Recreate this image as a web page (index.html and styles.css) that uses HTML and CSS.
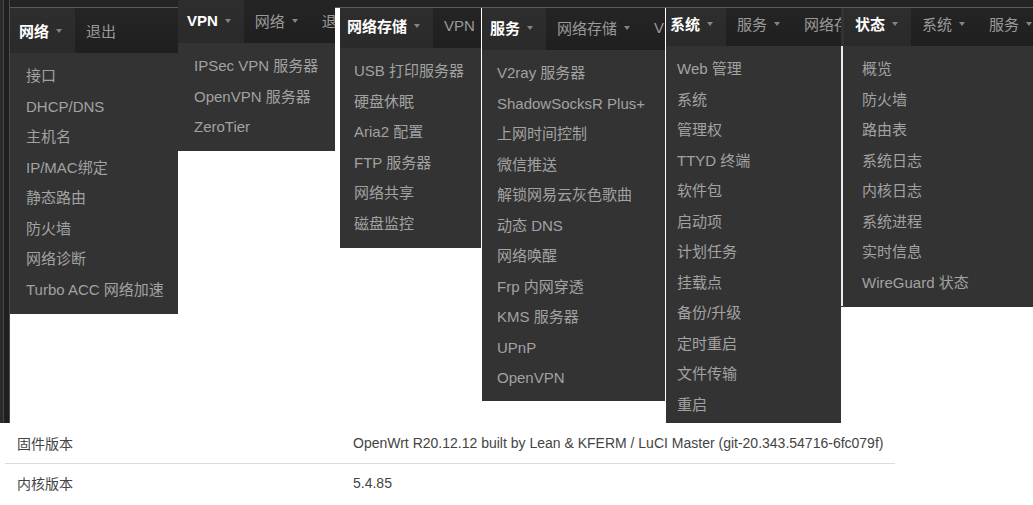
FILE: index.html
```html
<!DOCTYPE html>
<html lang="zh-CN">
<head>
<meta charset="utf-8">
<title>OpenWrt 菜单</title>
<link rel="stylesheet" href="styles.css">
</head>
<body>
<div class="collage">
  <div class="topband"></div>
  <div class="leftstrip"></div>

  <div class="panel p-net">
    <div class="inner">
      <nav class="bar">
        <span class="tab active">网络<i class="caret"></i></span>
        <span class="tab">退出</span>
      </nav>
      <ul class="drop">
        <li>接口</li>
        <li>DHCP/DNS</li>
        <li>主机名</li>
        <li>IP/MAC绑定</li>
        <li>静态路由</li>
        <li>防火墙</li>
        <li>网络诊断</li>
        <li>Turbo ACC 网络加速</li>
      </ul>
    </div>
  </div>

  <div class="panel p-vpn">
    <div class="inner">
      <nav class="bar">
        <span class="tab active">VPN<i class="caret"></i></span>
        <span class="tab">网络<i class="caret"></i></span>
        <span class="tab">退出</span>
      </nav>
      <ul class="drop">
        <li>IPSec VPN 服务器</li>
        <li>OpenVPN 服务器</li>
        <li>ZeroTier</li>
      </ul>
    </div>
  </div>

  <div class="panel p-nas">
    <div class="inner">
      <nav class="bar">
        <span class="tab active">网络存储<i class="caret"></i></span>
        <span class="tab">VPN<i class="caret"></i></span>
      </nav>
      <ul class="drop">
        <li>USB 打印服务器</li>
        <li>硬盘休眠</li>
        <li>Aria2 配置</li>
        <li>FTP 服务器</li>
        <li>网络共享</li>
        <li>磁盘监控</li>
      </ul>
    </div>
  </div>

  <div class="panel p-svc">
    <div class="inner">
      <nav class="bar">
        <span class="tab active">服务<i class="caret"></i></span>
        <span class="tab">网络存储<i class="caret"></i></span>
        <span class="tab">VPN<i class="caret"></i></span>
      </nav>
      <ul class="drop">
        <li>V2ray 服务器</li>
        <li>ShadowSocksR Plus+</li>
        <li>上网时间控制</li>
        <li>微信推送</li>
        <li>解锁网易云灰色歌曲</li>
        <li>动态 DNS</li>
        <li>网络唤醒</li>
        <li>Frp 内网穿透</li>
        <li>KMS 服务器</li>
        <li>UPnP</li>
        <li>OpenVPN</li>
      </ul>
    </div>
  </div>

  <div class="panel p-sys">
    <div class="inner">
      <nav class="bar">
        <span class="tab active">系统<i class="caret"></i></span>
        <span class="tab">服务<i class="caret"></i></span>
        <span class="tab">网络存储<i class="caret"></i></span>
      </nav>
      <ul class="drop">
        <li>Web 管理</li>
        <li>系统</li>
        <li>管理权</li>
        <li>TTYD 终端</li>
        <li>软件包</li>
        <li>启动项</li>
        <li>计划任务</li>
        <li>挂载点</li>
        <li>备份/升级</li>
        <li>定时重启</li>
        <li>文件传输</li>
        <li>重启</li>
      </ul>
    </div>
  </div>

  <div class="panel p-stat">
    <div class="inner">
      <nav class="bar">
        <span class="tab active">状态<i class="caret"></i></span>
        <span class="tab">系统<i class="caret"></i></span>
        <span class="tab">服务<i class="caret"></i></span>
      </nav>
      <ul class="drop">
        <li>概览</li>
        <li>防火墙</li>
        <li>路由表</li>
        <li>系统日志</li>
        <li>内核日志</li>
        <li>系统进程</li>
        <li>实时信息</li>
        <li>WireGuard 状态</li>
      </ul>
    </div>
  </div>
</div>

<div class="info">
  <div class="row first">
    <span class="k">固件版本</span>
    <span class="v">OpenWrt R20.12.12 built by Lean &amp; KFERM / LuCI Master (git-20.343.54716-6fc079f)</span>
  </div>
  <div class="row">
    <span class="k">内核版本</span>
    <span class="v">5.4.85</span>
  </div>
</div>
</body>
</html>
```

FILE: styles.css
```css
* { box-sizing: border-box; }

html, body {
  margin: 0;
  padding: 0;
  background: #ffffff;
}

body {
  width: 1033px;
  height: 505px;
  overflow: hidden;
  font-family: "Liberation Sans", "Noto Sans CJK SC", sans-serif;
}

.collage {
  position: relative;
  height: 423px;
}

.topband {
  position: absolute;
  left: 0;
  top: 0;
  width: 1033px;
  height: 8px;
  background: linear-gradient(to bottom, #242424 0, #242424 7px, #5a5a5a 7px, #5a5a5a 8px);
}

.leftstrip {
  position: absolute;
  left: 0;
  top: 0;
  width: 10px;
  height: 423px;
  background: linear-gradient(to right, #2b2b2b 0, #2b2b2b 3px, #454545 3px, #454545 4px, #1f1f1f 4px, #1f1f1f 9px, #4d4d4d 9px, #4d4d4d 10px);
}

.panel {
  position: absolute;
  overflow: hidden;
  background: #333333;
}

.inner {
  display: flex;
  flex-direction: column;
}

.bar {
  display: flex;
  flex-wrap: nowrap;
  height: 45px;
  overflow: hidden;
  background: linear-gradient(to bottom, #252525, #1f1f1f);
  white-space: nowrap;
}

.tab {
  display: flex;
  align-items: center;
  flex: 0 0 auto;
  padding: 0 13px 0 11px;
  font-size: 15px;
  color: #9a9a9a;
}

.tab:last-child {
  flex: 0 1 auto;
  min-width: 0;
  overflow: hidden;
  padding-right: 0;
}

.tab.active {
  color: #ffffff;
  font-weight: bold;
  background: linear-gradient(to bottom, #2e2e2e, #2a2a2a);
}

.caret {
  display: inline-block;
  flex: none;
  width: 0;
  height: 0;
  margin-left: 7px;
  border-left: 3.5px solid transparent;
  border-right: 3.5px solid transparent;
  border-top: 4px solid #858585;
}

.drop {
  list-style: none;
  margin: 0;
  padding: 8px 0;
  background: #333333;
}

.drop li {
  height: 30.5px;
  line-height: 30.5px;
  padding-left: 18px;
  font-size: 15px;
  color: #a2a2a2;
  white-space: nowrap;
}

/* panel placement on the collage */
.p-net { left: 10px; top: 8px; width: 168px; height: 306px; }
.p-net .inner { margin-left: -2px; margin-top: 0; }

.p-vpn { left: 178px; top: 0; width: 157px; height: 151px; }
.p-vpn .inner { margin-left: -2px; margin-top: -2px; }

.p-nas { left: 340px; top: 8px; width: 141px; height: 240px; }
.p-nas .inner { margin-left: -4px; margin-top: -5px; }

.p-svc { left: 482px; top: 8px; width: 183px; height: 393px; }
.p-svc .inner { margin-left: -3px; margin-top: -3px; }

.p-sys { left: 666px; top: 8px; width: 175px; height: 415px; }
.p-sys .inner { margin-left: -7px; margin-top: -7px; }

.p-stat { left: 841px; top: 8px; width: 192px; height: 299px; }
.p-stat .inner { margin-left: 3px; margin-top: -7px; }
.p-stat .drop { border-left: 2px solid #ececec; margin-left: -3px; padding-left: 1px; }

/* info table */
.info {
  margin-left: 5px;
  width: 890px;
  font-size: 14px;
  color: #444444;
}

.row {
  display: grid;
  grid-template-columns: 336px 1fr;
  align-items: center;
  padding-left: 12px;
  height: 38px;
}

.row.first {
  height: 41px;
  border-bottom: 1px solid #dcdcdc;
}
```
